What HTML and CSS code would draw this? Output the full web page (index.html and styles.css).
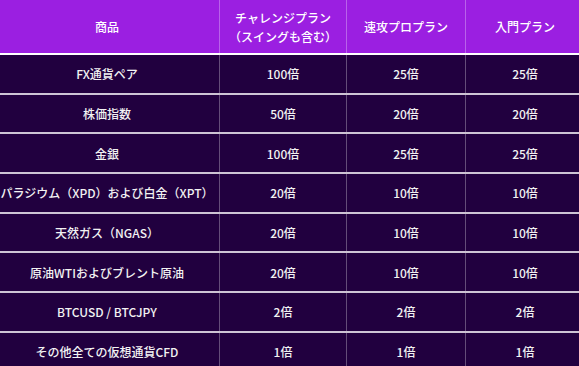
FILE: index.html
```html
<!DOCTYPE html>
<html lang="ja">
<head>
<meta charset="utf-8">
<title>レバレッジ比較</title>
<link rel="stylesheet" href="styles.css">
</head>
<body>
<table class="lev">
  <thead>
    <tr>
      <th class="c1">商品</th>
      <th class="c2">チャレンジプラン<br>（スイングも含む）</th>
      <th class="c3">速攻プロプラン</th>
      <th class="c4">入門プラン</th>
    </tr>
  </thead>
  <tbody>
    <tr><td>FX通貨ペア</td><td>100倍</td><td>25倍</td><td>25倍</td></tr>
    <tr><td>株価指数</td><td>50倍</td><td>20倍</td><td>20倍</td></tr>
    <tr><td>金銀</td><td>100倍</td><td>25倍</td><td>25倍</td></tr>
    <tr><td>パラジウム（XPD）および白金（XPT）</td><td>20倍</td><td>10倍</td><td>10倍</td></tr>
    <tr><td>天然ガス（NGAS）</td><td>20倍</td><td>10倍</td><td>10倍</td></tr>
    <tr><td>原油WTIおよびブレント原油</td><td>20倍</td><td>10倍</td><td>10倍</td></tr>
    <tr><td>BTCUSD / BTCJPY</td><td>2倍</td><td>2倍</td><td>2倍</td></tr>
    <tr><td>その他全ての仮想通貨CFD</td><td>1倍</td><td>1倍</td><td>1倍</td></tr>
  </tbody>
</table>
</body>
</html>
```

FILE: styles.css
```css
html, body {
  margin: 0;
  padding: 0;
  background: #21003f;
  overflow: hidden;
}
.lev {
  margin-left: -5px;
  width: 589px;
  border-collapse: collapse;
  table-layout: fixed;
  font-family: "Noto Sans CJK JP", "Noto Sans", sans-serif;
  font-size: 12px;
  font-weight: 500;
  color: #f2f2f2;
  text-align: center;
}
.lev th {
  background: #9b1fe1;
  color: #ffffff;
  font-weight: 500;
  height: 53px;
  padding: 0;
  line-height: 19px;
  border-bottom: 2px solid #ffffff;
  border-right: 1px solid rgba(255, 255, 255, 0.3);
}
.lev .c1 { width: 224px; }
.lev .c2 { width: 126px; }
.lev .c3 { width: 118px; }
.lev td {
  background: #21003f;
  height: 37.7px;
  padding: 0;
  border-top: 2px solid rgba(235, 230, 240, 0.85);
  border-right: 1px solid rgba(255, 255, 255, 0.3);
}
.lev th:last-child,
.lev td:last-child {
  border-right: none;
}
```
